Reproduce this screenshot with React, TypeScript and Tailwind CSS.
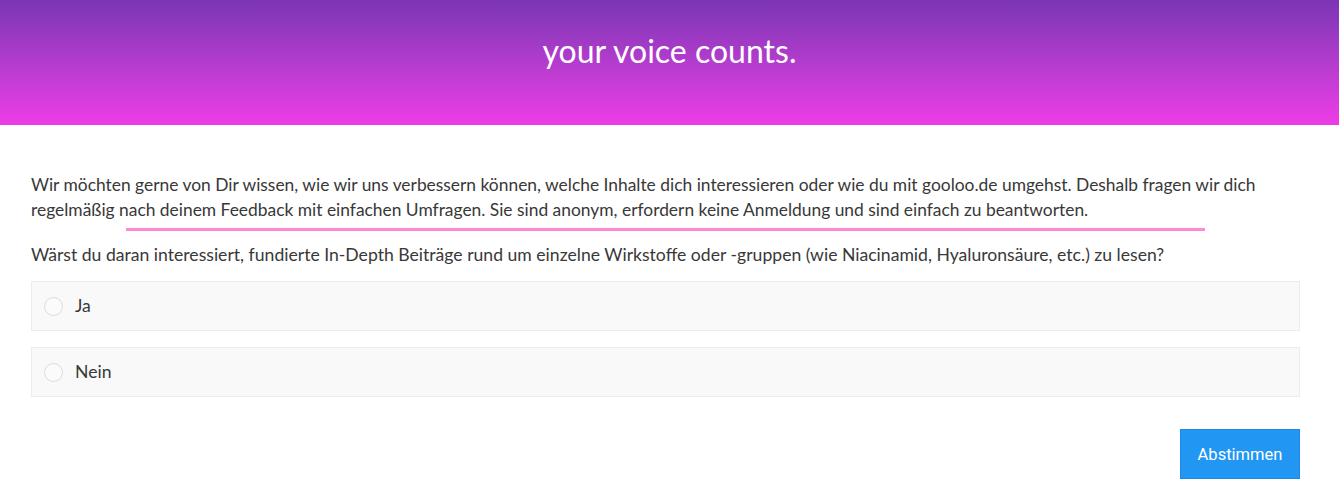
export default function App() {
  return (
    <div className="min-h-screen bg-white" style={{ fontFamily: 'Lato, "Noto Sans", sans-serif' }}>
      {/* Header */}
      <div className="h-[125px] bg-gradient-to-b from-[#7b35b4] to-[#ee3ce7] flex justify-center pt-[32px]">
        <h1 className="text-[32px] leading-[38px] text-white font-normal">your voice counts.</h1>
      </div>

      {/* Content */}
      <div className="pl-[31px] pr-[39px] pt-[47px] text-[#383838]">
        <p className="text-[17.4px] leading-[25px]">
          Wir möchten gerne von Dir wissen, wie wir uns verbessern können, welche Inhalte dich interessieren oder wie du
          mit gooloo.de umgehst. Deshalb fragen wir dich regelmäßig nach deinem Feedback mit einfachen Umfragen. Sie sind
          anonym, erfordern keine Anmeldung und sind einfach zu beantworten.
        </p>
        <div className="mx-auto mt-[6px] h-[3px] w-[85%] bg-[#fd8ad9]" />
        <p className="mt-[11px] text-[17.6px] leading-[25px]">
          Wärst du daran interessiert, fundierte In-Depth Beiträge rund um einzelne Wirkstoffe oder -gruppen (wie
          Niacinamid, Hyaluronsäure, etc.) zu lesen?
        </p>

        <div className="mt-[14px] flex flex-col gap-[16px]">
          {['Ja', 'Nein'].map((label) => (
            <label
              key={label}
              className="flex h-[50px] items-center gap-[12px] border border-[#ececec] bg-[#f9f9f9] pl-[12px]"
            >
              <span className="h-[19px] w-[19px] rounded-full border border-[#dcdcdc] bg-[#fbfbfb]" />
              <span className="text-[17.6px] text-[#383838]">{label}</span>
            </label>
          ))}
        </div>

        <div className="mt-[32px] flex justify-end">
          <button
            className="h-[50px] w-[120px] bg-[#2196f3] border border-[#1e88e5] pt-[2px] text-[16.5px] text-white"
            style={{ fontFamily: 'Roboto, sans-serif' }}
          >
            Abstimmen
          </button>
        </div>
      </div>
    </div>
  );
}
